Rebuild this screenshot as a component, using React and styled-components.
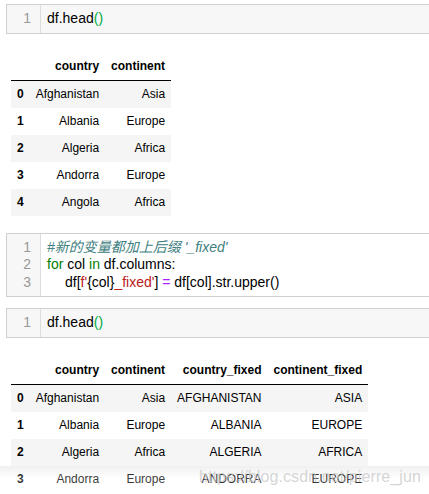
import React from "react";
import styled, { createGlobalStyle } from "styled-components";

const GlobalStyle = createGlobalStyle`
  html, body {
    margin: 0;
    padding: 0;
    background: #fff;
    overflow: hidden;
  }
  body {
    font-family: "Liberation Sans", Arial, "Noto Sans CJK SC", sans-serif;
    color: #000;
  }
`;

const Page = styled.div`
  position: relative;
  width: 429px;
  height: 494px;
  overflow: hidden;
  padding: 4px 0 0 6px;
  box-sizing: border-box;
`;

const Cell = styled.div`
  display: flex;
  width: 450px;
  border: 1px solid #cfcfcf;
  border-right: none;
  margin-top: ${(p) => p.$top || 0}px;
  background: #f7f7f7;
`;

const Gutter = styled.div`
  width: 34px;
  flex-shrink: 0;
  border-right: 1px solid #dddddd;
  padding: 5px 9px 5px 0;
  box-sizing: border-box;
  text-align: right;
  font-size: 14px;
  line-height: 17.5px;
  color: #999;
`;

const Code = styled.div`
  flex: 1;
  padding: 5px 6px;
  font-size: 14px;
  line-height: 17.5px;
  background: ${(p) => (p.$editing ? "#fff" : "#f7f7f7")};
  white-space: pre;
`;

const Line = styled.div``;

const Bracket = styled.span`
  color: #00aa44;
`;

const Comment = styled.span`
  color: #408080;
  font-style: italic;
`;

const Keyword = styled.span`
  color: #008000;
`;

const Str = styled.span`
  color: #ba2121;
`;

const Op = styled.span`
  color: #aa22ff;
`;

const Indent = styled.span`
  display: inline-block;
  width: 18px;
`;

const Output = styled.div`
  margin: ${(p) => p.$top}px 0 0 5px;
`;

const Table = styled.table`
  border-collapse: collapse;
  font-size: 12px;

  th,
  td {
    padding: 6px;
    line-height: 15px;
    text-align: right;
    white-space: nowrap;
  }

  thead th {
    border-bottom: 1px solid #000;
  }

  tbody th {
    text-align: left;
  }

  tbody tr:nth-child(odd) {
    background: #f5f5f5;
  }
`;

const Fade = styled.div`
  position: absolute;
  left: 0;
  right: 0;
  bottom: 0;
  height: 28px;
  background: linear-gradient(
    rgba(0, 0, 0, 0.06),
    rgba(255, 255, 255, 0.25) 45%,
    rgba(255, 255, 255, 0.1)
  );
  pointer-events: none;
`;

const Watermark = styled.div`
  position: absolute;
  right: 8px;
  bottom: 8px;
  font-size: 16px;
  color: rgba(200, 200, 200, 0.75);
  letter-spacing: 0.1px;
  pointer-events: none;
`;

const rows = [
  ["Afghanistan", "Asia"],
  ["Albania", "Europe"],
  ["Algeria", "Africa"],
  ["Andorra", "Europe"],
  ["Angola", "Africa"],
];

const HeadCell = ({ top }) => (
  <Cell $top={top}>
    <Gutter>1</Gutter>
    <Code>
      df.head<Bracket>()</Bracket>
    </Code>
  </Cell>
);

const DataTable = ({ data, fixed }) => (
  <Table>
    <thead>
      <tr>
        <th></th>
        <th>country</th>
        <th>continent</th>
        {fixed && <th>country_fixed</th>}
        {fixed && <th>continent_fixed</th>}
      </tr>
    </thead>
    <tbody>
      {data.map(([country, continent], i) => (
        <tr key={country}>
          <th>{i}</th>
          <td>{country}</td>
          <td>{continent}</td>
          {fixed && <td>{country.toUpperCase()}</td>}
          {fixed && <td>{continent.toUpperCase()}</td>}
        </tr>
      ))}
    </tbody>
  </Table>
);

export default function App() {
  return (
    <>
      <GlobalStyle />
      <Page>
        <HeadCell />
        <Output $top={19}>
          <DataTable data={rows} />
        </Output>

        <Cell $top={17}>
          <Gutter>
            1<br />2<br />3
          </Gutter>
          <Code $editing>
            <Line>
              <Comment>#新的变量都加上后缀 '_fixed'</Comment>
            </Line>
            <Line>
              <Keyword>for</Keyword> col <Keyword>in</Keyword> df.columns:
            </Line>
            <Line>
              <Indent />
              df[<Str>f'</Str>
              {"{col}"}
              <Str>_fixed'</Str>] <Op>=</Op> df[col].str.upper()
            </Line>
          </Code>
        </Cell>

        <HeadCell top={11} />
        <Output $top={19}>
          <DataTable data={rows.slice(0, 4)} fixed />
        </Output>

        <Fade />
        <Watermark>https://blog.csdn.net/pierre_jun</Watermark>
      </Page>
    </>
  );
}
